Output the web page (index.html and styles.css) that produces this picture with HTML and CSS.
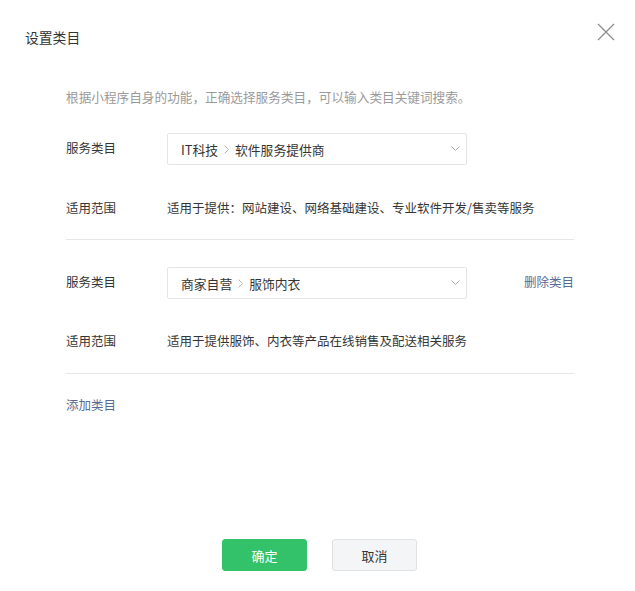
FILE: index.html
```html
<!DOCTYPE html>
<html lang="zh-CN">
<head>
<meta charset="utf-8">
<title>设置类目</title>
<link rel="stylesheet" href="styles.css">
</head>
<body>
<div class="dialog">
  <div class="header">
    <h3 class="title">设置类目</h3>
    <button class="close" aria-label="关闭">
      <svg width="18" height="18" viewBox="0 0 18 18"><path d="M1 1 L17 17 M17 1 L1 17" stroke="#8c8c8c" stroke-width="1.2" fill="none"/></svg>
    </button>
  </div>
  <div class="body">
    <p class="intro">根据小程序自身的功能，正确选择服务类目，可以输入类目关键词搜索。</p>

    <div class="row row-select first">
      <span class="label">服务类目</span>
      <div class="select">
        <span class="crumb">IT科技</span>
        <svg class="sep" width="5" height="9" viewBox="0 0 5 9"><path d="M0.5 0.5 L4.5 4.5 L0.5 8.5" stroke="#b5b5b5" stroke-width="1" fill="none"/></svg>
        <span class="crumb">软件服务提供商</span>
        <svg class="arrow" width="9" height="6" viewBox="0 0 9 6"><path d="M0.5 0.5 L4.5 4.5 L8.5 0.5" stroke="#a8a8a8" stroke-width="1" fill="none"/></svg>
      </div>
    </div>
    <div class="row row-scope">
      <span class="label">适用范围</span>
      <span class="scope">适用于提供：网站建设、网络基础建设、专业软件开发/售卖等服务</span>
    </div>
    <div class="divider d1"></div>

    <div class="row row-select second">
      <span class="label">服务类目</span>
      <div class="select">
        <span class="crumb">商家自营</span>
        <svg class="sep" width="5" height="9" viewBox="0 0 5 9"><path d="M0.5 0.5 L4.5 4.5 L0.5 8.5" stroke="#b5b5b5" stroke-width="1" fill="none"/></svg>
        <span class="crumb">服饰内衣</span>
        <svg class="arrow" width="9" height="6" viewBox="0 0 9 6"><path d="M0.5 0.5 L4.5 4.5 L8.5 0.5" stroke="#a8a8a8" stroke-width="1" fill="none"/></svg>
      </div>
      <a class="link delete" href="#">删除类目</a>
    </div>
    <div class="row row-scope s2">
      <span class="label">适用范围</span>
      <span class="scope">适用于提供服饰、内衣等产品在线销售及配送相关服务</span>
    </div>
    <div class="divider d2"></div>

    <a class="link add" href="#">添加类目</a>
  </div>
  <div class="footer">
    <button class="btn primary">确定</button>
    <button class="btn default">取消</button>
  </div>
</div>
</body>
</html>
```
FILE: styles.css
```css
html, body {
  margin: 0;
  padding: 0;
  background: #fff;
}
body {
  font-family: "Noto Sans CJK SC", "Noto Sans", sans-serif;
  color: #353535;
}
.dialog {
  position: relative;
  width: 635px;
  height: 591px;
  display: flex;
  flex-direction: column;
  box-sizing: border-box;
}
.header {
  padding: 28px 25px 0;
}
.title {
  margin: 0;
  font-size: 13.8px;
  line-height: 18px;
  font-weight: normal;
  color: #353535;
}
.close {
  position: absolute;
  top: 23px;
  left: 597px;
  width: 18px;
  height: 18px;
  padding: 0;
  border: 0;
  background: none;
  cursor: pointer;
}
.close svg { display: block; }
.body {
  padding: 0 61px 0 66px;
  font-size: 12.5px;
}
.intro {
  margin: 41px 0 0;
  font-size: 12.65px;
  line-height: 20px;
  color: #9a9a9a;
}
.row {
  display: flex;
  align-items: center;
}
.row-select { height: 32px; }
.row-select.first { margin-top: 26px; }
.row-select.second { margin-top: 27px; }
.row-scope {
  margin-top: 33px;
  line-height: 20px;
}
.row-scope.s2 { margin-top: 32px; }
.label {
  width: 101px;
  flex: none;
  font-size: 12.5px;
  color: #353535;
}
.row-select .label { padding-bottom: 3px; }
.row-scope .label, .scope { padding-bottom: 1px; }
.scope { font-size: 12.5px; color: #353535; }
.select {
  box-sizing: border-box;
  width: 300px;
  height: 32px;
  border: 1px solid #e4e4e4;
  border-radius: 2px;
  padding: 0 0 0 13px;
  display: flex;
  align-items: center;
  font-size: 12.8px;
  color: #353535;
}
.sep { margin: 0 6px 0 6px; flex: none; }
.arrow { margin-left: auto; margin-right: 6px; flex: none; }
.divider {
  height: 1px;
  background: #e7e7e7;
}
.d1 { margin-top: 20px; }
.d2 { margin-top: 21px; }
.link {
  color: #576b95;
  text-decoration: none;
  font-size: 12.5px;
}
.delete { margin-left: auto; padding-bottom: 3px; }
.add {
  display: block;
  margin-top: 21px;
  line-height: 20px;
}
.footer {
  margin-top: auto;
  padding: 0 0 20px 4px;
  display: flex;
  justify-content: center;
  gap: 25px;
}
.btn {
  width: 85px;
  height: 32px;
  border-radius: 3px;
  font-family: inherit;
  font-size: 13px;
  padding: 0;
  cursor: pointer;
}
.primary {
  background: #33c26a;
  border: 1px solid #33c26a;
  color: #fff;
}
.default {
  background: #f4f5f7;
  border: 1px solid #dfe0e2;
  color: #353535;
}
```
